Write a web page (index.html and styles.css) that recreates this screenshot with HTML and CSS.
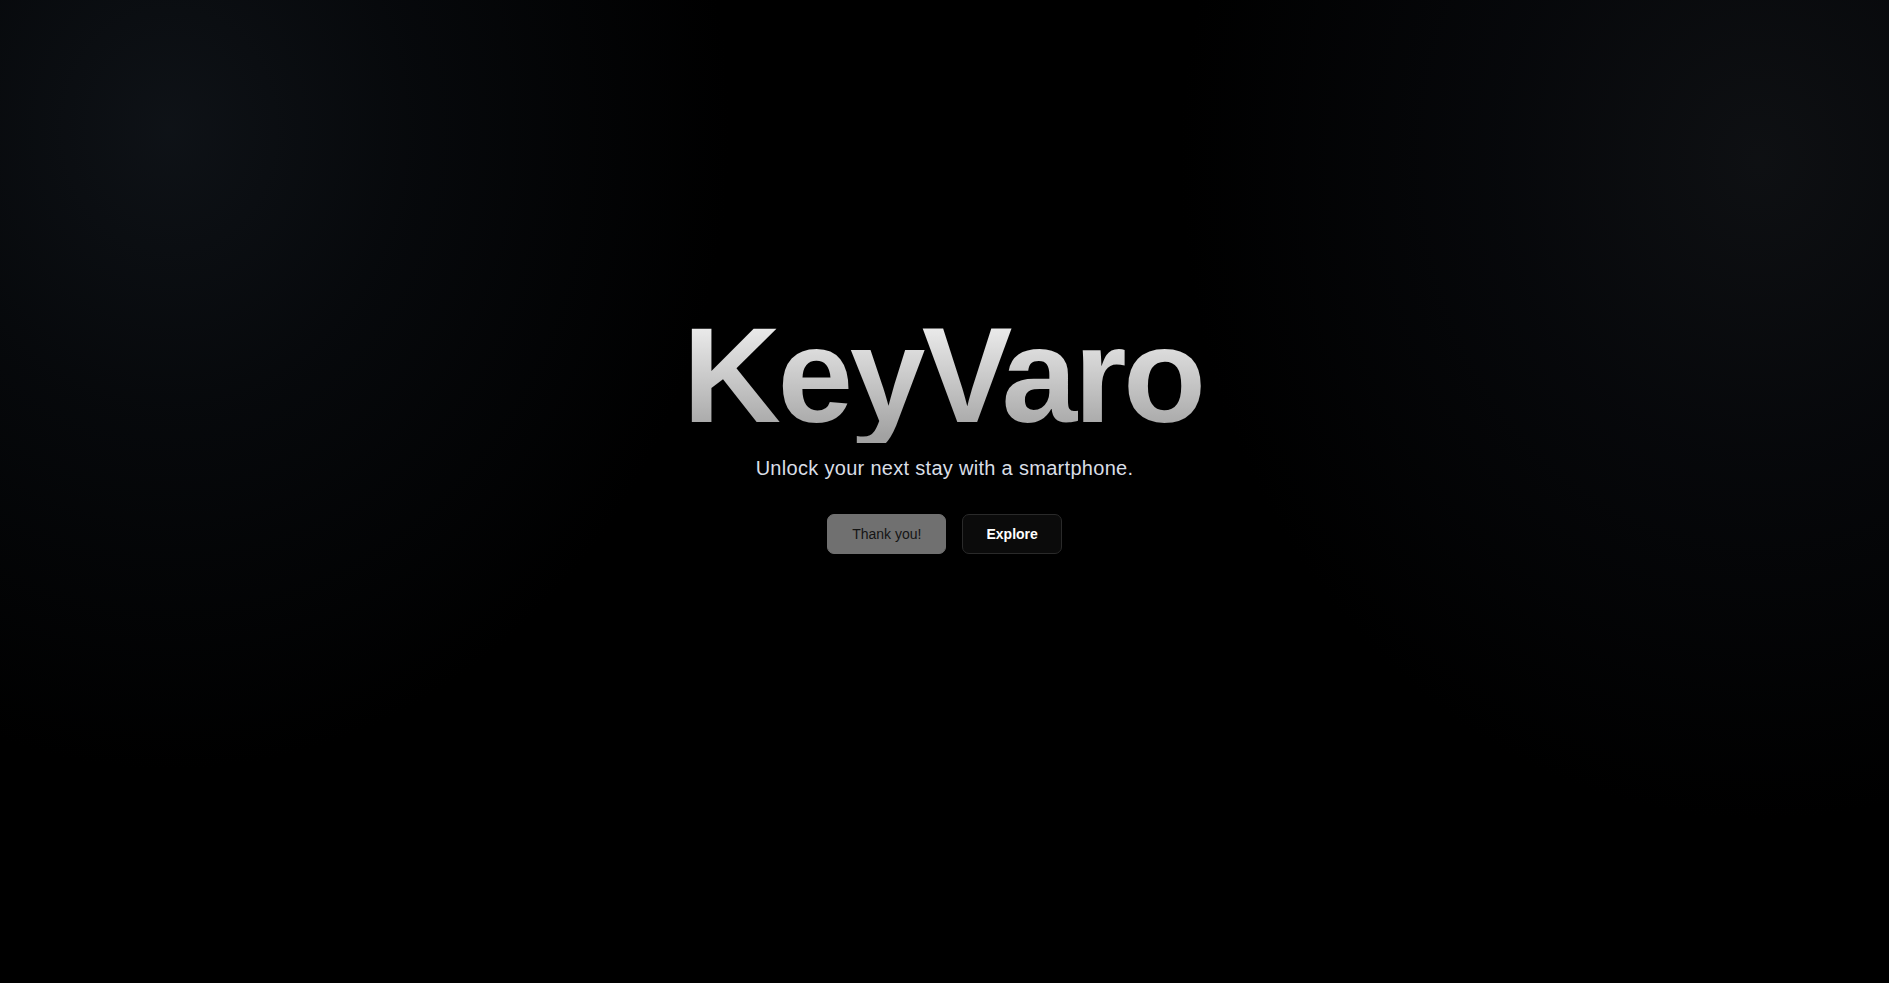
FILE: index.html
```html
<!DOCTYPE html>
<html lang="en">
<head>
<meta charset="utf-8">
<title>KeyVaro</title>
<link rel="stylesheet" href="styles.css">
</head>
<body>
<main class="hero">
  <h1 class="title">KeyVaro</h1>
  <p class="subtitle">Unlock your next stay with a smartphone.</p>
  <div class="actions">
    <button class="btn btn-muted" type="button">Thank you!</button>
    <button class="btn btn-dark" type="button">Explore</button>
  </div>
</main>
</body>
</html>
```

FILE: styles.css
```css
* { box-sizing: border-box; }
html, body { height: 100%; }
body {
  margin: 0;
  background-color: #000;
  background-image:
    radial-gradient(ellipse 560px 640px at 170px 130px, rgba(15,19,24,0.95) 0%, rgba(9,12,16,0.7) 45%, rgba(0,0,0,0) 100%),
    radial-gradient(ellipse 580px 660px at 1760px 160px, rgba(15,17,20,0.95) 0%, rgba(9,11,15,0.7) 45%, rgba(0,0,0,0) 100%);
  background-repeat: no-repeat;
  font-family: "Liberation Sans", Arial, sans-serif;
  color: #fff;
}
.hero {
  min-height: 100vh;
  display: flex;
  flex-direction: column;
  align-items: center;
  padding-top: 307px;
}
.title {
  margin: 0;
  font-size: 136px;
  line-height: 136px;
  font-weight: 700;
  letter-spacing: -3.5px;
  padding-right: 3.5px;
  background: linear-gradient(180deg, #efefef 10%, #a2a2a2 95%);
  -webkit-background-clip: text;
  background-clip: text;
  color: transparent;
}
.subtitle {
  margin: 11px 0 0;
  font-size: 20px;
  line-height: 28px;
  letter-spacing: 0.3px;
  color: #d9dee6;
}
.actions {
  margin-top: 32px;
  display: flex;
  gap: 16px;
}
.btn {
  height: 40px;
  padding: 0 24px;
  border-radius: 7px;
  font-family: "Liberation Sans", Arial, sans-serif;
  font-size: 14px;
  cursor: pointer;
}
.btn-muted {
  background: #707070;
  border: 1px solid #707070;
  color: #141414;
}
.btn-dark {
  background: #0b0b0b;
  border: 1px solid #2a2a2a;
  color: #fff;
  font-weight: 700;
  padding: 0 23px;
}
```
